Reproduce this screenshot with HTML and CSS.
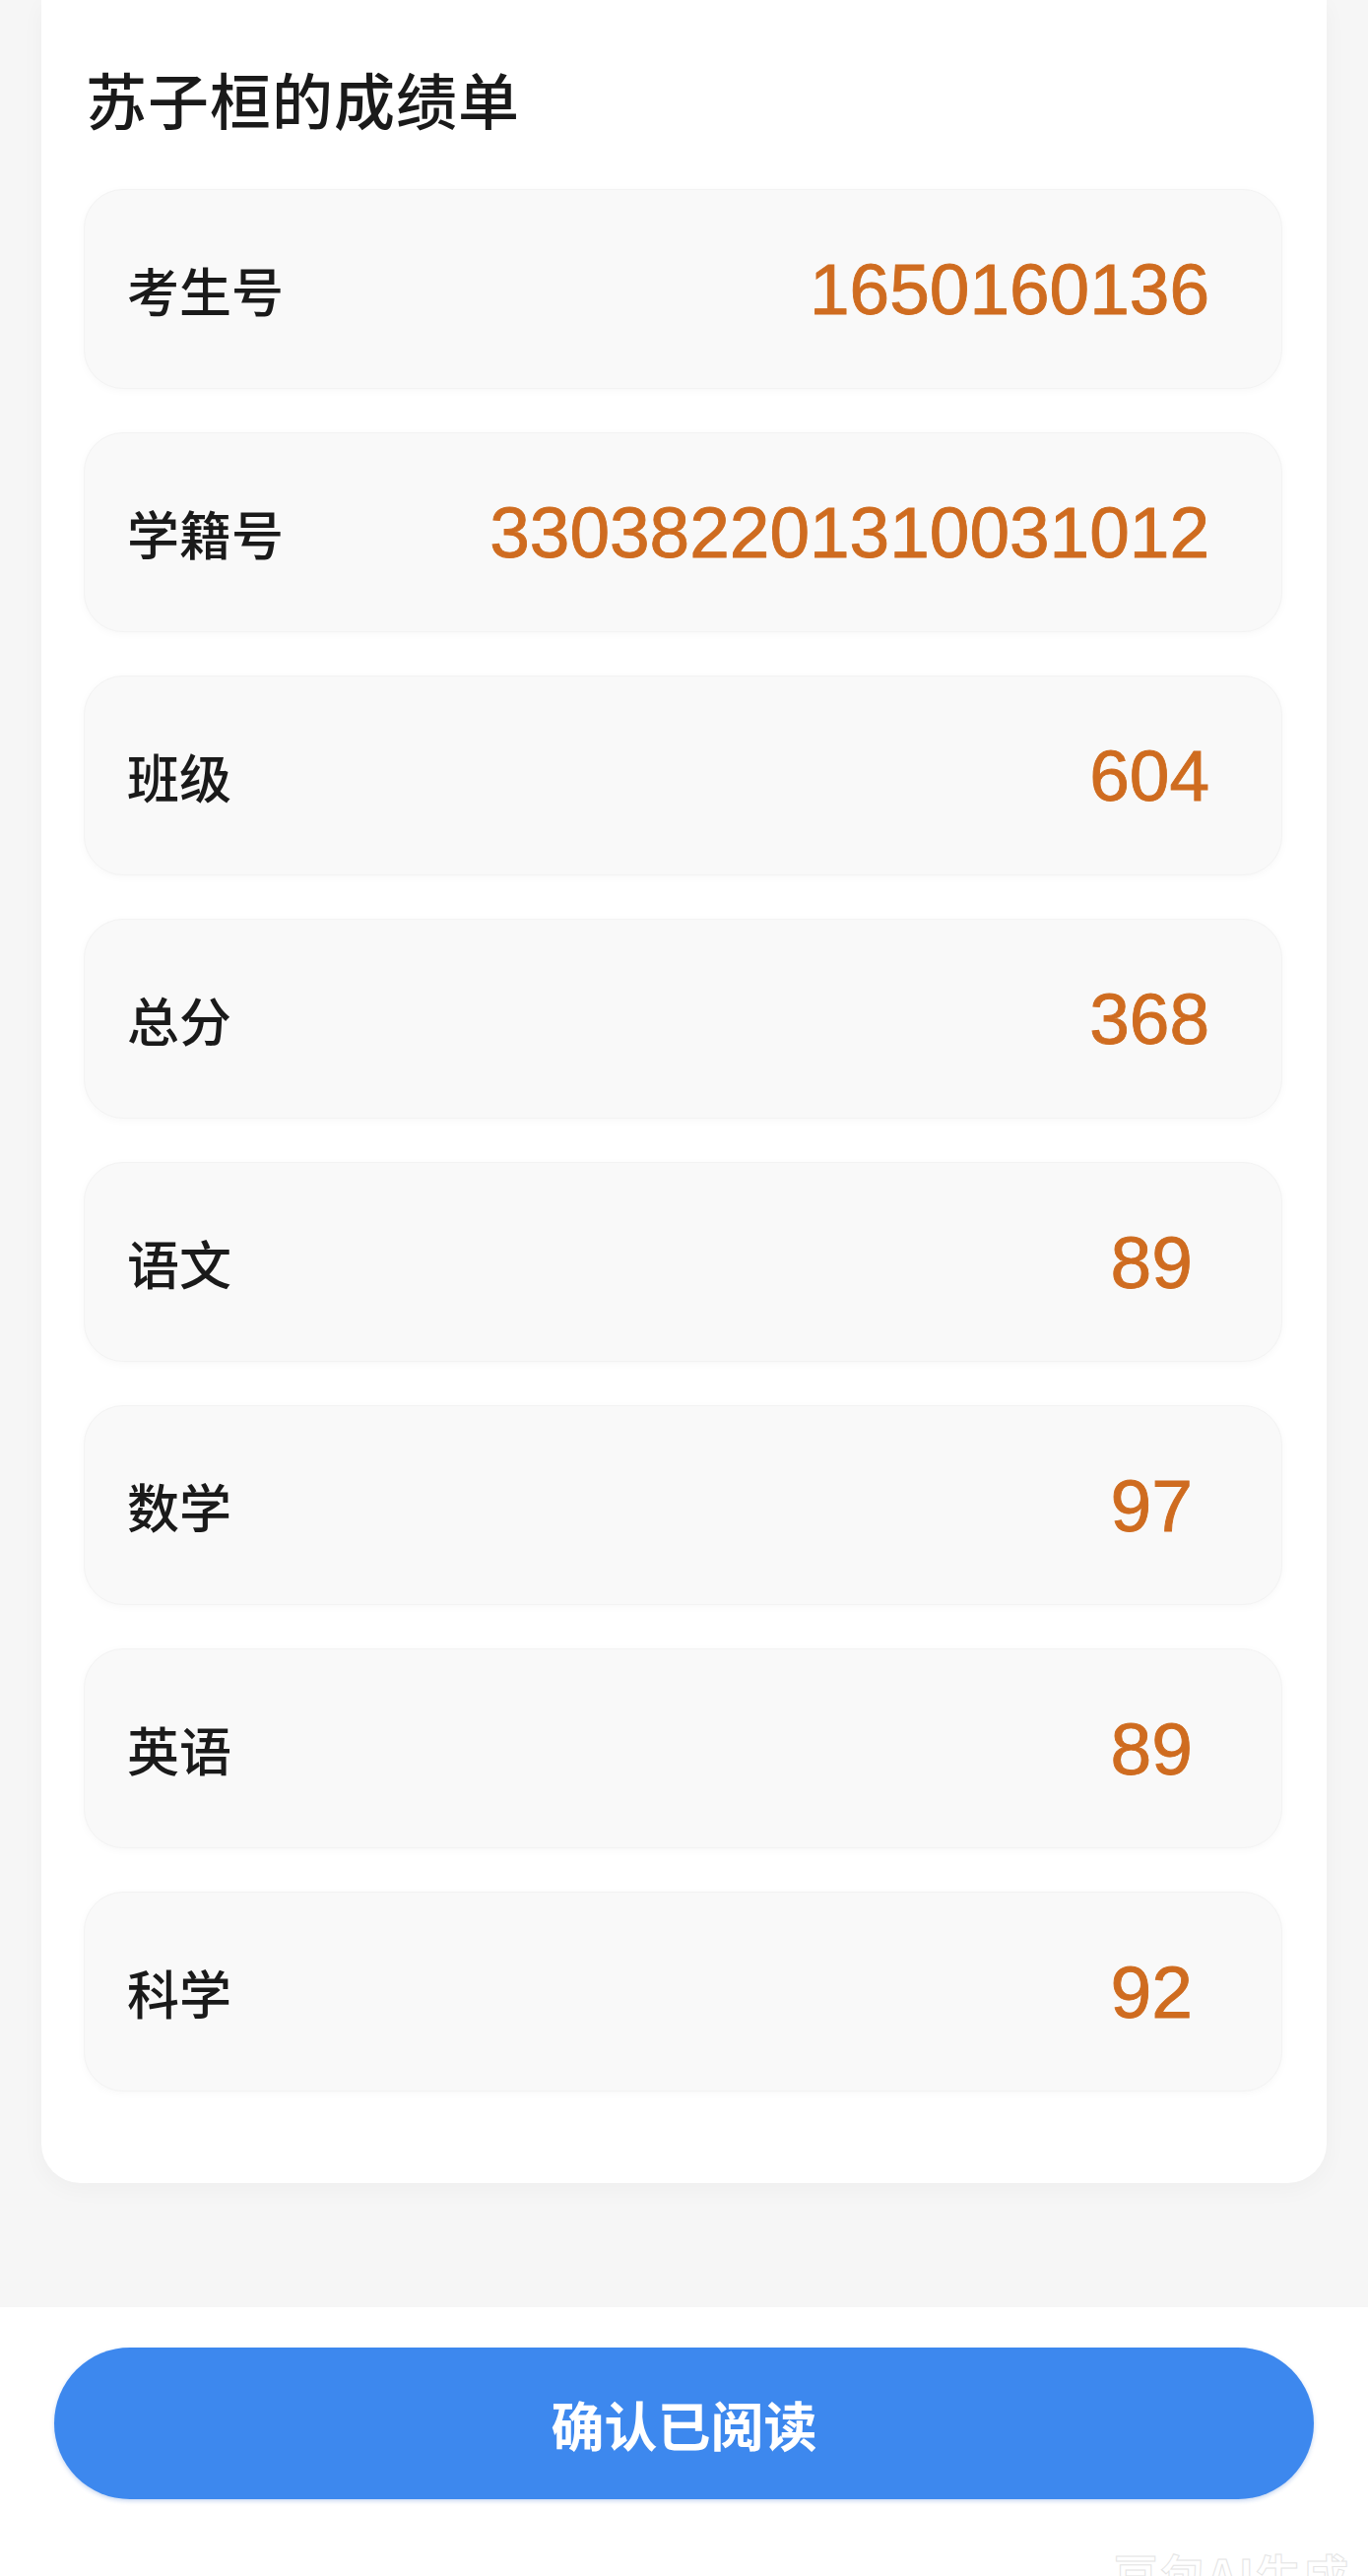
FILE: index.html
```html
<!DOCTYPE html>
<html lang="zh-CN">
<head>
<meta charset="utf-8">
<title>苏子桓的成绩单</title>
<link rel="stylesheet" href="styles.css">
</head>
<body>
<div class="page">
  <section class="card">
    <h1 class="title">苏子桓的成绩单</h1>
    <div class="rows">
      <div class="row"><span class="label">考生号</span><span class="value">1650160136</span></div>
      <div class="row"><span class="label">学籍号</span><span class="value">330382201310031012</span></div>
      <div class="row"><span class="label">班级</span><span class="value">604</span></div>
      <div class="row"><span class="label">总分</span><span class="value">368</span></div>
      <div class="row"><span class="label">语文</span><span class="value short">89</span></div>
      <div class="row"><span class="label">数学</span><span class="value short">97</span></div>
      <div class="row"><span class="label">英语</span><span class="value short">89</span></div>
      <div class="row"><span class="label">科学</span><span class="value short">92</span></div>
    </div>
  </section>
</div>
<footer class="footer">
  <button class="confirm" type="button">确认已阅读</button>
  <span class="watermark">豆包AI生成</span>
</footer>
</body>
</html>
```
FILE: styles.css
```css
html, body {
  margin: 0;
  padding: 0;
}
body {
  background: #f6f6f6;
  font-family: "Noto Sans CJK SC", "Noto Sans", sans-serif;
  color: #1c1c1c;
  width: 1389px;
  height: 2616px;
  overflow: hidden;
}
.page {
  padding: 0 42px 0 42px;
  height: 2343px;
  box-sizing: border-box;
}
.card {
  background: #ffffff;
  border-radius: 0 0 40px 40px;
  padding: 63px 45px 93px 43px;
  box-shadow: 0 6px 24px rgba(0, 0, 0, 0.035);
}
.title {
  margin: 0 0 55px 2px;
  font-size: 62px;
  line-height: 74px;
  font-weight: 500;
  color: #1a1a1a;
  letter-spacing: 1px;
}
.rows {
  display: flex;
  flex-direction: column;
  gap: 44px;
}
.row {
  height: 203px;
  box-sizing: border-box;
  display: flex;
  align-items: center;
  justify-content: space-between;
  padding: 0 73px 0 43px;
  background: #f9f9f9;
  border-radius: 40px;
  box-shadow: 0 2px 8px rgba(0, 0, 0, 0.03);
  border: 1px solid #f3f3f3;
}
.label {
  font-size: 53px;
  font-weight: 500;
  color: #1a1a1a;
}
.value {
  font-family: "Liberation Sans", Arial, sans-serif;
  font-size: 73px;
  color: #cf6c20;
  -webkit-text-stroke: 0.9px #cf6c20;
}
.value.short {
  margin-right: 17px;
  font-size: 75px;
}
.footer {
  position: relative;
  height: 273px;
  background: #ffffff;
  padding: 41px 55px 0 55px;
  box-sizing: border-box;
  overflow: hidden;
}
.confirm {
  display: block;
  width: 100%;
  height: 154px;
  border: none;
  border-radius: 77px;
  background: #3d88ee;
  color: #ffffff;
  font-family: "Noto Sans CJK SC", "Noto Sans", sans-serif;
  font-size: 54px;
  font-weight: 600;
  box-shadow: 0 2px 4px rgba(40, 100, 200, 0.25);
}
.watermark {
  position: absolute;
  right: 18px;
  bottom: -30px;
  font-family: "Noto Sans CJK SC", sans-serif;
  font-size: 46px;
  font-weight: 700;
  color: #ffffff;
  -webkit-text-stroke: 1px #e4e4e4;
  letter-spacing: 2px;
}
```
